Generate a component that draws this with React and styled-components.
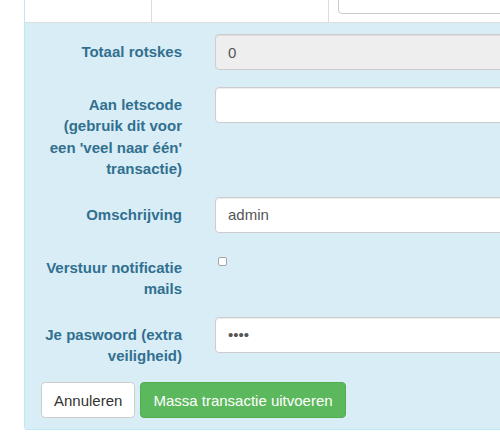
import React from "react";
import styled, { createGlobalStyle } from "styled-components";

const GlobalStyle = createGlobalStyle`
  html, body {
    margin: 0;
    padding: 0;
    background: #fff;
    overflow: hidden;
  }
  * {
    box-sizing: border-box;
  }
  body {
    font-family: "Liberation Sans", Arial, Helvetica, sans-serif;
    font-size: 15px;
    line-height: 1.42857;
    color: #333;
  }
`;

const Panel = styled("div")(() => ({
  marginLeft: "24px",
  width: "1000px",
  border: "1px solid #bce8f1",
  borderTop: "none",
  borderRadius: "0 0 4px 4px",
  boxShadow: "0 1px 1px rgba(0,0,0,.05)",
  background: "#fff",
}));

const TableRow = styled("div")(() => ({
  display: "flex",
  height: "23px",
  borderBottom: "1px solid #ddd",
  overflow: "hidden",
}));

const Cell = styled("div")(({ $width, $first }) => ({
  display: "flex",
  alignItems: "flex-end",
  flex: $width ? `0 0 ${$width}px` : "1 1 auto",
  borderLeft: $first ? "none" : "1px solid #ddd",
  padding: "0 8px 8px 9px",
}));

const CellInput = styled("div")(() => ({
  flexShrink: 0,
  width: "100%",
  height: "36px",
  border: "1px solid #ccc",
  borderRadius: "4px",
  background: "#fff",
}));

const Body = styled("div")(() => ({
  background: "#d9edf7",
  padding: "11px 0 11px 0",
  borderRadius: "0 0 3px 3px",
}));

const FormRow = styled("div")(() => ({
  display: "grid",
  gridTemplateColumns: "175px 1fr",
  marginBottom: "17px",
}));

const Label = styled("label")(() => ({
  paddingTop: "7px",
  paddingLeft: "15px",
  paddingRight: "18px",
  textAlign: "right",
  fontWeight: "bold",
  color: "#31708f",
}));

const Control = styled("div")(() => ({
  paddingLeft: "15px",
}));

const Input = styled("input")(({ readOnly }) => ({
  display: "block",
  width: "100%",
  height: "36px",
  padding: "6px 12px",
  fontFamily: "inherit",
  fontSize: "15px",
  lineHeight: "1.42857",
  color: "#555",
  background: readOnly ? "#eee" : "#fff",
  border: "1px solid #ccc",
  borderRadius: "4px",
  boxShadow: "inset 0 1px 1px rgba(0,0,0,.075)",
  outline: "none",
}));

const Check = styled("input")(() => ({
  appearance: "none",
  display: "block",
  width: "9px",
  height: "9px",
  margin: "7px 0 0 3px",
  background: "#fff",
  border: "1px solid #a5a5a5",
  borderRadius: "2px",
}));

const Actions = styled("div")(() => ({
  display: "flex",
  gap: "5px",
  paddingLeft: "16px",
  marginTop: "-1px",
}));

const Button = styled("button")(({ $primary }) => ({
  height: "36px",
  padding: "6px 12px",
  fontFamily: "inherit",
  fontSize: "15px",
  lineHeight: "1.42857",
  borderRadius: "4px",
  cursor: "pointer",
  color: $primary ? "#fff" : "#333",
  background: $primary ? "#5cb85c" : "#fff",
  border: `1px solid ${$primary ? "#4cae4c" : "#ccc"}`,
}));

const rows = [
  { label: "Totaal rotskes", type: "readonly", value: "0" },
  { label: "Aan letscode (gebruik dit voor een 'veel naar één' transactie)", type: "text", value: "" },
  { label: "Omschrijving", type: "text", value: "admin" },
  { label: "Verstuur notificatie mails", type: "checkbox" },
  { label: "Je paswoord (extra veiligheid)", type: "password", value: "test" },
];

const App = () => {
  const getControl = (row) => {
    switch (row.type) {
      case "readonly":
        return <Input readOnly defaultValue={row.value} />;
      case "checkbox":
        return <Check type="checkbox" />;
      case "password":
        return <Input type="password" defaultValue={row.value} />;
      default:
        return <Input type="text" defaultValue={row.value} />;
    }
  };

  return (
    <>
      <GlobalStyle />
      <Panel>
        <TableRow>
          <Cell $first $width={126} />
          <Cell $width={177} />
          <Cell>
            <CellInput />
          </Cell>
        </TableRow>
        <Body>
          {rows.map((row, i) => (
            <FormRow key={i}>
              <Label>{row.label}</Label>
              <Control>{getControl(row)}</Control>
            </FormRow>
          ))}
          <Actions>
            <Button>Annuleren</Button>
            <Button $primary>Massa transactie uitvoeren</Button>
          </Actions>
        </Body>
      </Panel>
    </>
  );
};

export default App;
